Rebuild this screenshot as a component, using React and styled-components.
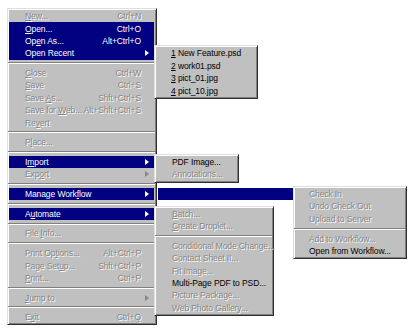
import React from 'react'
import styled, { createGlobalStyle, css } from 'styled-components'

const GlobalStyle = createGlobalStyle`
  html, body {
    margin: 0;
    background: #fff;
  }
  body {
    font-family: "Liberation Sans", Arial, sans-serif;
  }
`

const ROW_H = '12.4px'
const SEP_H = '7.3px'

const Page = styled.div`
  padding: 8px 0 0 7px;
  width: 415px;
  height: 335px;
  box-sizing: border-box;
`

const frame = css`
  background: #c0c0c0;
  border: 1px solid;
  border-color: #dfdfdf #303030 #303030 #dfdfdf;
  box-shadow: inset 1px 1px #fff, inset -1px -1px #808080;
  padding: 1px 2px 1px 1px;
  box-sizing: border-box;
`

const Menu = styled.div`
  ${frame}
  width: 150px;
`

const SubMenu = styled.div`
  ${frame}
  position: absolute;
  top: -2px;
  left: ${props => props.left || '100%'};
  width: ${props => props.width};
  z-index: 2;
`

const Row = styled.div`
  position: relative;
  height: ${ROW_H};
  display: grid;
  grid-template-columns: 1fr auto 10px;
  align-items: center;
  padding: 0 3px 0 ${props => props.indent || '16px'};
  font-size: 8.5px;
  letter-spacing: -0.1px;
  white-space: nowrap;
  background: ${props => props.state === 'hl' ? '#000080' : 'transparent'};
  color: ${props => props.state === 'hl' ? '#fff' : props.state === 'off' ? '#868686' : '#000'};
  text-shadow: ${props => props.state === 'off' ? '1px 1px 0 #fbfbfb' : 'none'};

  u {
    text-decoration: underline;
    text-underline-offset: 1px;
  }
`

const Shortcut = styled.span`
  text-align: right;
`

const Arrow = styled.span`
  justify-self: end;
  margin-right: 2px;
  width: 0;
  height: 0;
  border-top: 3.5px solid transparent;
  border-bottom: 3.5px solid transparent;
  border-left: 4px solid currentColor;
`

const Separator = styled.div`
  height: ${SEP_H};
  display: flex;
  flex-direction: column;
  justify-content: center;

  &::before {
    content: '';
    display: block;
    margin: 0 -1px;
    border-top: 1px solid #808080;
    border-bottom: 1px solid #fff;
  }
`

const Connector = styled.div`
  position: absolute;
  top: 0;
  bottom: 0;
  left: calc(100% + 4px);
  width: 136px;
  background: #000080;
`

// "&" marks the mnemonic letter
const Label = ({ text }) => {
  const i = text.indexOf('&')
  if (i < 0) return <span>{text}</span>
  return (
    <span>
      {text.slice(0, i)}
      <u>{text[i + 1]}</u>
      {text.slice(i + 2)}
    </span>
  )
}

const Items = ({ list, indent }) => list.map((it, i) =>
  it === '-' ? <Separator key={i} /> : (
    <Row key={i} state={it.state || 'off'} indent={indent}>
      <Label text={it.label} />
      <Shortcut>{it.shortcut}</Shortcut>
      {it.arrow ? <Arrow /> : <span />}
      {it.children}
    </Row>
  )
)

const recent = [
  { label: '&1 New Feature.psd', state: 'on' },
  { label: '&2 work01.psd', state: 'on' },
  { label: '&3 pict_01.jpg', state: 'on' },
  { label: '&4 pict_10.jpg', state: 'on' },
]

const importItems = [
  { label: 'PDF Image...', state: 'on' },
  { label: 'Annotations...' },
]

const workflow = [
  { label: 'Check In' },
  { label: 'Undo Check Out' },
  { label: 'Upload to Server' },
  '-',
  { label: 'Add to Workflow...' },
  { label: 'Open from Workflow...', state: 'on' },
]

const automate = [
  { label: '&Batch...' },
  { label: '&Create Droplet...' },
  '-',
  { label: 'Conditional Mode Change...' },
  { label: 'Contact Sheet II...' },
  { label: 'Fit Image...' },
  { label: 'Multi-Page PDF to PSD...', state: 'on' },
  { label: 'Picture Package...' },
  { label: 'Web Photo Gallery...' },
]

const fileMenu = [
  { label: '&New...', shortcut: 'Ctrl+N' },
  { label: '&Open...', shortcut: 'Ctrl+O', state: 'hl' },
  { label: 'Op&en As...', shortcut: 'Alt+Ctrl+O', state: 'hl' },
  {
    label: 'Open Recent', state: 'hl', arrow: true,
    children: (
      <SubMenu width="104px">
        <Items list={recent} indent="15px" />
      </SubMenu>
    ),
  },
  '-',
  { label: '&Close', shortcut: 'Ctrl+W' },
  { label: '&Save', shortcut: 'Ctrl+S' },
  { label: 'Save &As...', shortcut: 'Shft+Ctrl+S' },
  { label: 'Save for &Web...', shortcut: 'Alt+Shft+Ctrl+S' },
  { label: 'Re&vert' },
  '-',
  { label: 'P&lace...' },
  '-',
  {
    label: 'I&mport', state: 'hl', arrow: true,
    children: (
      <SubMenu width="85px">
        <Items list={importItems} indent="16px" />
      </SubMenu>
    ),
  },
  { label: 'Exp&ort', arrow: true },
  '-',
  {
    label: 'Manage Work&flow', state: 'hl', arrow: true,
    children: (
      <>
        <Connector />
        <SubMenu width="114px" left="284px">
          <Items list={workflow} indent="14px" />
        </SubMenu>
      </>
    ),
  },
  '-',
  {
    label: 'A&utomate', state: 'hl', arrow: true,
    children: (
      <SubMenu width="120px">
        <Items list={automate} indent="16px" />
      </SubMenu>
    ),
  },
  '-',
  { label: 'File &Info...' },
  '-',
  { label: 'Print Op&tions...', shortcut: 'Alt+Ctrl+P' },
  { label: 'Page Set&up...', shortcut: 'Shft+Ctrl+P' },
  { label: '&Print...', shortcut: 'Ctrl+P' },
  '-',
  { label: '&Jump to', arrow: true },
  '-',
  { label: 'E&xit', shortcut: 'Ctrl+Q' },
]

const App = () => {
  return (
    <Page>
      <GlobalStyle />
      <Menu>
        <Items list={fileMenu} />
      </Menu>
    </Page>
  )
}

export default App
